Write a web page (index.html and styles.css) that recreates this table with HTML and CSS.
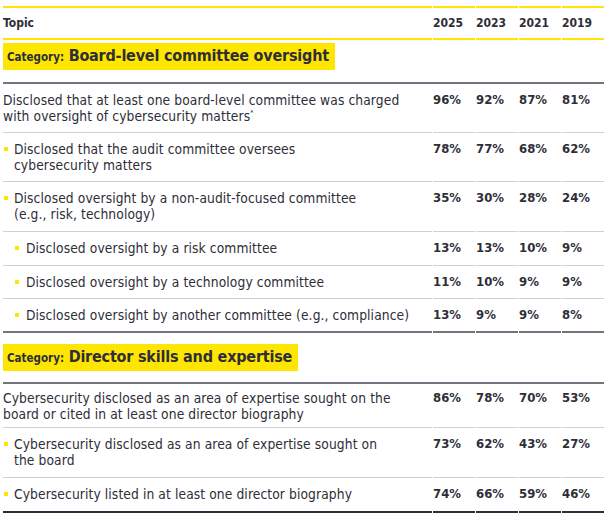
FILE: index.html
```html
<!DOCTYPE html>
<html lang="en">
<head>
<meta charset="utf-8">
<title>Cybersecurity disclosures</title>
<link rel="stylesheet" href="styles.css">
</head>
<body>
<table class="data">
  <colgroup>
    <col class="c-topic"><col class="c-val"><col class="c-val"><col class="c-val"><col class="c-val">
  </colgroup>
  <thead>
    <tr class="head">
      <th class="topic">Topic</th><th>2025</th><th>2023</th><th>2021</th><th>2019</th>
    </tr>
  </thead>
  <tbody>
    <tr class="cat cat-first">
      <td colspan="5"><span class="cat-box"><span class="cat-label">Category:</span> <span class="cat-title">Board-level committee oversight</span></span></td>
    </tr>
    <tr class="row">
      <td class="topic">Disclosed that at least one board-level committee was charged<br>with oversight of cybersecurity matters<sup>*</sup></td>
      <td>96%</td><td>92%</td><td>87%</td><td>81%</td>
    </tr>
    <tr class="row">
      <td class="topic l1">Disclosed that the audit committee oversees<br>cybersecurity matters</td>
      <td>78%</td><td>77%</td><td>68%</td><td>62%</td>
    </tr>
    <tr class="row plus">
      <td class="topic l1">Disclosed oversight by a non-audit-focused committee<br>(e.g., risk, technology)</td>
      <td>35%</td><td>30%</td><td>28%</td><td>24%</td>
    </tr>
    <tr class="row plus">
      <td class="topic l2">Disclosed oversight by a risk committee</td>
      <td>13%</td><td>13%</td><td>10%</td><td>9%</td>
    </tr>
    <tr class="row">
      <td class="topic l2">Disclosed oversight by a technology committee</td>
      <td>11%</td><td>10%</td><td>9%</td><td>9%</td>
    </tr>
    <tr class="row section-end">
      <td class="topic l2">Disclosed oversight by another committee (e.g., compliance)</td>
      <td>13%</td><td>9%</td><td>9%</td><td>8%</td>
    </tr>
    <tr class="cat cat-next">
      <td colspan="5"><span class="cat-box"><span class="cat-label">Category:</span> <span class="cat-title">Director skills and expertise</span></span></td>
    </tr>
    <tr class="row after-cat">
      <td class="topic">Cybersecurity disclosed as an area of expertise sought on the<br>board or cited in at least one director biography</td>
      <td>86%</td><td>78%</td><td>70%</td><td>53%</td>
    </tr>
    <tr class="row tall">
      <td class="topic l1">Cybersecurity disclosed as an area of expertise sought on<br>the board</td>
      <td>73%</td><td>62%</td><td>43%</td><td>27%</td>
    </tr>
    <tr class="row last plus">
      <td class="topic l1">Cybersecurity listed in at least one director biography</td>
      <td>74%</td><td>66%</td><td>59%</td><td>46%</td>
    </tr>
  </tbody>
</table>
</body>
</html>
```

FILE: styles.css
```css
html, body {
  margin: 0;
  padding: 0;
  background: #ffffff;
}

body {
  padding: 6px 8px 0 3px;
  font-family: "DejaVu Sans Condensed", "DejaVu Sans", sans-serif;
  color: #2e2e38;
}

.data {
  width: 603px;
  border-collapse: separate;
  border-spacing: 1px 0;
  margin-left: -1px;
  table-layout: fixed;
}

.c-topic { width: 429px; }
.c-val { width: 42px; }

.data th,
.data td {
  padding: 0;
  text-align: left;
  vertical-align: top;
}

.head th {
  border-top: 2px solid #ffe600;
  border-bottom: 2px solid #ffe600;
  font-size: 12px;
  font-weight: 700;
  height: 30px;
  vertical-align: middle;
  line-height: 16px;
}

.cat td {
  border-bottom: 2px solid #747480;
}

.cat-first td { padding: 3px 0 12px; }
.cat-next td { padding: 11px 0 11px; }

.cat-box {
  display: inline-block;
  background: #ffe600;
  padding: 3px 6px 3px 4px;
  line-height: 20px;
  white-space: nowrap;
}

.cat-label {
  font-size: 11.5px;
  font-weight: 700;
}

.cat-title {
  font-size: 16px;
  font-weight: 700;
  letter-spacing: -0.2px;
}

.row td {
  padding: 8px 0 8px;
  border-bottom: 1px solid #cfcfd6;
  font-size: 13px;
  line-height: 16px;
  font-weight: 700;
}

.row td.topic {
  font-size: 13.7px;
  font-weight: 400;
  letter-spacing: 0.1px;
  padding-right: 10px;
  white-space: nowrap;
}

.row.plus td { padding-bottom: 9px; }
.row.after-cat td { padding-top: 6px; padding-bottom: 5px; }
.row.tall td { padding-bottom: 9px; }

.row.section-end td {
  border-bottom: 2px solid #747480;
}

.row.last td {
  border-bottom: 2px solid #2e2e38;
}

.topic sup {
  font-size: 7px;
  line-height: 0;
  vertical-align: baseline;
  position: relative;
  top: -6px;
}

.l1 {
  padding-left: 11px !important;
  position: relative;
}

.l2 {
  padding-left: 23px !important;
  position: relative;
}

.l1::before,
.l2::before {
  content: "";
  position: absolute;
  top: 14px;
  width: 4px;
  height: 4px;
  background: #ffe600;
}

.l1::before { left: 1px; }
.l2::before { left: 12px; }
```
